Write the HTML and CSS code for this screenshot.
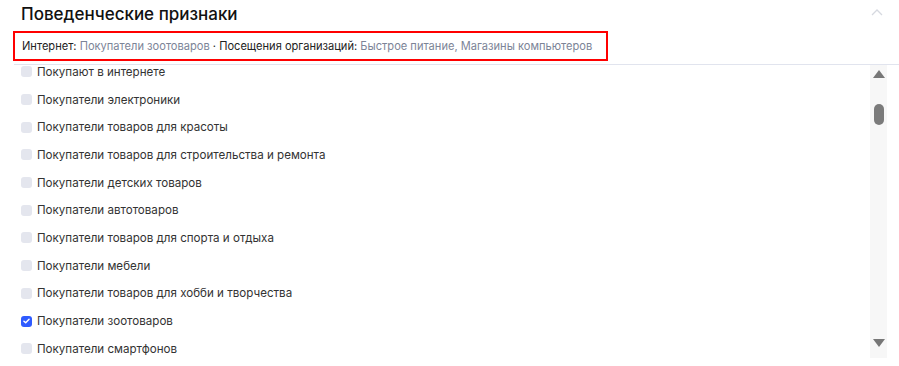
FILE: index.html
```html
<!DOCTYPE html>
<html lang="ru">
<head>
  <meta charset="UTF-8" />
  <title>Поведенческие признаки</title>
  <link rel="stylesheet" href="styles.css">
</head>
<body>
  <div class="panel">
    <div class="panel-head">
      <h2>Поведенческие признаки</h2>
      <svg class="collapse" width="12" height="8" viewBox="0 0 12 8"><path d="M1 7 L6 2 L11 7" fill="none" stroke="#d6d9e0" stroke-width="1.3"/></svg>
    </div>
    <div class="summary">
      <span class="key">Интернет:</span> <span class="val">Покупатели зоотоваров</span> · <span class="key">Посещения организаций:</span> <span class="val">Быстрое питание, Магазины компьютеров</span>
    </div>
    <div class="body">
      <div class="list-wrap">
        <ul class="list">
          <li><span class="box"></span>Покупают в интернете</li>
          <li><span class="box"></span>Покупатели электроники</li>
          <li><span class="box"></span>Покупатели товаров для красоты</li>
          <li><span class="box"></span>Покупатели товаров для строительства и ремонта</li>
          <li><span class="box"></span>Покупатели детских товаров</li>
          <li><span class="box"></span>Покупатели автотоваров</li>
          <li><span class="box"></span>Покупатели товаров для спорта и отдыха</li>
          <li><span class="box"></span>Покупатели мебели</li>
          <li><span class="box"></span>Покупатели товаров для хобби и творчества</li>
          <li><span class="box checked"><svg width="12" height="12" viewBox="0 0 12 12"><path d="M3.2 6.2 L5.1 8 L8.8 4.2" fill="none" stroke="#fff" stroke-width="1.6" stroke-linecap="round" stroke-linejoin="round"/></svg></span>Покупатели зоотоваров</li>
          <li><span class="box"></span>Покупатели смартфонов</li>
        </ul>
      </div>
      <div class="scrollbar">
        <span class="arrow up"></span>
        <span class="thumb"></span>
        <span class="arrow down"></span>
      </div>
    </div>
  </div>
</body>
</html>
```

FILE: styles.css
```css
* { box-sizing: border-box; }
body {
  margin: 0;
  font-family: Inter, "Noto Sans", sans-serif;
  background: #fff;
  color: #222;
}

.panel {
  width: 899px;
  height: 366px;
  overflow: hidden;
}

.panel-head {
  display: flex;
  justify-content: space-between;
  align-items: center;
  height: 28px;
  padding: 0 16px 0 21px;
}

.panel-head h2 {
  margin: 0;
  font-size: 17px;
  font-weight: 500;
  color: #111;
}

.collapse {
  margin-top: -4px;
}

.summary {
  margin: 3px 0 0 13px;
  width: 595px;
  height: 30px;
  border: 2px solid #f00;
  padding: 0 0 0 7px;
  font-size: 11.1px;
  line-height: 26px;
  white-space: nowrap;
}

.summary .key { color: #222; }
.summary .val { color: #7c8497; }

.body {
  margin: 3px 0 0 14px;
  border-top: 1px solid #e1e4ee;
  display: flex;
  height: 294px;
}

.list-wrap {
  flex: 1;
  overflow: hidden;
}

.list {
  list-style: none;
  margin: -7px 0 0;
  padding: 0 0 0 7px;
}

.list li {
  height: 27.7px;
  display: flex;
  align-items: center;
  gap: 5px;
  font-size: 11.6px;
  color: #333;
}

.box {
  width: 11px;
  height: 11px;
  border-radius: 3px;
  background: #e4e6ee;
  display: flex;
  align-items: center;
  justify-content: center;
}

.box.checked {
  background: #2f5bff;
}

.scrollbar {
  width: 17px;
  margin-right: 12px;
  background: #f7f7f7;
  display: flex;
  flex-direction: column;
  align-items: center;
  padding: 5px 0 0;
}

.arrow {
  width: 0;
  height: 0;
  border-left: 6px solid transparent;
  border-right: 6px solid transparent;
}

.arrow.up {
  border-bottom: 8px solid #777;
}

.arrow.down {
  border-top: 8px solid #777;
  margin-top: auto;
  margin-bottom: 11px;
}

.thumb {
  width: 10px;
  height: 21px;
  margin-top: 26px;
  border-radius: 5px;
  background: #7b7b7b;
}
```
